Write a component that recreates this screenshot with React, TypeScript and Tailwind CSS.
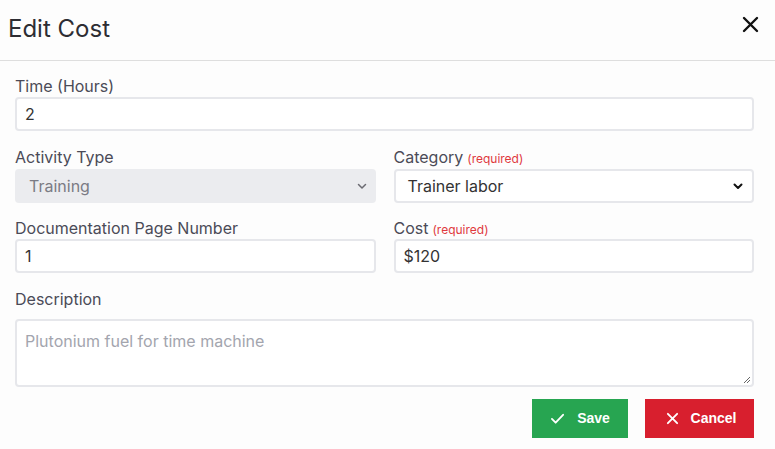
import React from "react";

const font = { fontFamily: "Inter, 'Noto Sans', sans-serif" };

function Chevron({ color, sw }: { color: string; sw: number }) {
  return (
    <svg width="12" height="12" viewBox="0 0 12 12" className="absolute right-[8px] top-1/2 -translate-y-1/2">
      <path d="M2.5 4.5 L6 8 L9.5 4.5" fill="none" stroke={color} strokeWidth={sw} strokeLinecap="round" strokeLinejoin="round" />
    </svg>
  );
}

function Label({ text, required }: { text: string; required?: boolean }) {
  return (
    <div className="h-[21px] leading-[21px] text-[16px] text-[#4b4b57] whitespace-nowrap">
      {text}
      {required && <span className="ml-[4px] text-[12px] text-[#e0393e]">(required)</span>}
    </div>
  );
}

export default function App() {
  return (
    <div className="w-[775px] h-[449px] bg-[#fdfdfd] overflow-hidden" style={font}>
      <div className="h-[61px] border-b border-[#dedede] flex items-center justify-between pl-[8px] pr-[16px]">
        <div className="text-[24px] text-[#2d2d33] mt-[-2px]">Edit Cost</div>
        <svg width="17" height="17" viewBox="0 0 17 17" className="mt-[-12px]">
          <path d="M2 2 L15 15 M15 2 L2 15" stroke="#111" strokeWidth="2.4" strokeLinecap="round" />
        </svg>
      </div>
      <div className="pl-[15px] pr-[21px] pt-[15px] flex flex-col">
        <Label text="Time (Hours)" />
        <div className="h-[34px] border-2 border-[#e6e7eb] rounded-[4px] bg-white flex items-center px-[8px] text-[16px] text-[#333]">2</div>
        <div className="grid grid-cols-2 gap-x-[18px] mt-[16px]">
          <div>
            <Label text="Activity Type" />
            <div className="relative mt-[1px] h-[34px] rounded-[4px] bg-[#ebecef] flex items-center pl-[14px] text-[16px] text-[#7b7b84]">
              Training
              <Chevron color="#6b6b72" sw={1.5} />
            </div>
          </div>
          <div>
            <Label text="Category" required />
            <div className="relative mt-[1px] h-[34px] border-2 border-[#e6e7eb] rounded-[4px] bg-white flex items-center pl-[12px] text-[16px] text-[#333]">
              Trainer labor
              <Chevron color="#111" sw={2} />
            </div>
          </div>
          <div className="mt-[15px]">
            <Label text="Documentation Page Number" />
            <div className="h-[34px] border-2 border-[#e6e7eb] rounded-[4px] bg-white flex items-center px-[8px] text-[16px] text-[#333]">1</div>
          </div>
          <div className="mt-[15px]">
            <Label text="Cost" required />
            <div className="h-[34px] border-2 border-[#e6e7eb] rounded-[4px] bg-white flex items-center px-[8px] text-[16px] text-[#333]">$120</div>
          </div>
        </div>
        <div className="mt-[16px]">
          <Label text="Description" />
        </div>
        <div className="relative mt-[9px] h-[68px] border-2 border-[#e6e7eb] rounded-[4px] bg-white px-[8px] pt-[8px] text-[16px] text-[#a3a5ae]">
          Plutonium fuel for time machine
          <svg width="9" height="9" viewBox="0 0 9 9" className="absolute right-[1px] bottom-[1px]">
            <path d="M8 2 L2 8 M8 5 L5 8" stroke="#666" strokeWidth="1" />
          </svg>
        </div>
        <div className="flex justify-end gap-[17px] mt-[12px]" style={{ fontFamily: "'Liberation Sans', Arial, sans-serif" }}>
          <div className="w-[96px] h-[39px] bg-[#27a551] text-white font-bold text-[14px] flex items-center justify-center gap-[12px]">
            <svg width="15" height="13" viewBox="0 0 16 14">
              <path d="M2 7.5 L6 11.5 L14 3" fill="none" stroke="white" strokeWidth="2" strokeLinecap="round" strokeLinejoin="round" />
            </svg>
            Save
          </div>
          <div className="w-[109px] h-[39px] bg-[#d81f2e] text-white font-bold text-[14px] flex items-center justify-center gap-[12px] pl-[3px]">
            <svg width="13" height="13" viewBox="0 0 14 14">
              <path d="M2 2 L12 12 M12 2 L2 12" stroke="white" strokeWidth="2" strokeLinecap="round" />
            </svg>
            Cancel
          </div>
        </div>
      </div>
    </div>
  );
}
